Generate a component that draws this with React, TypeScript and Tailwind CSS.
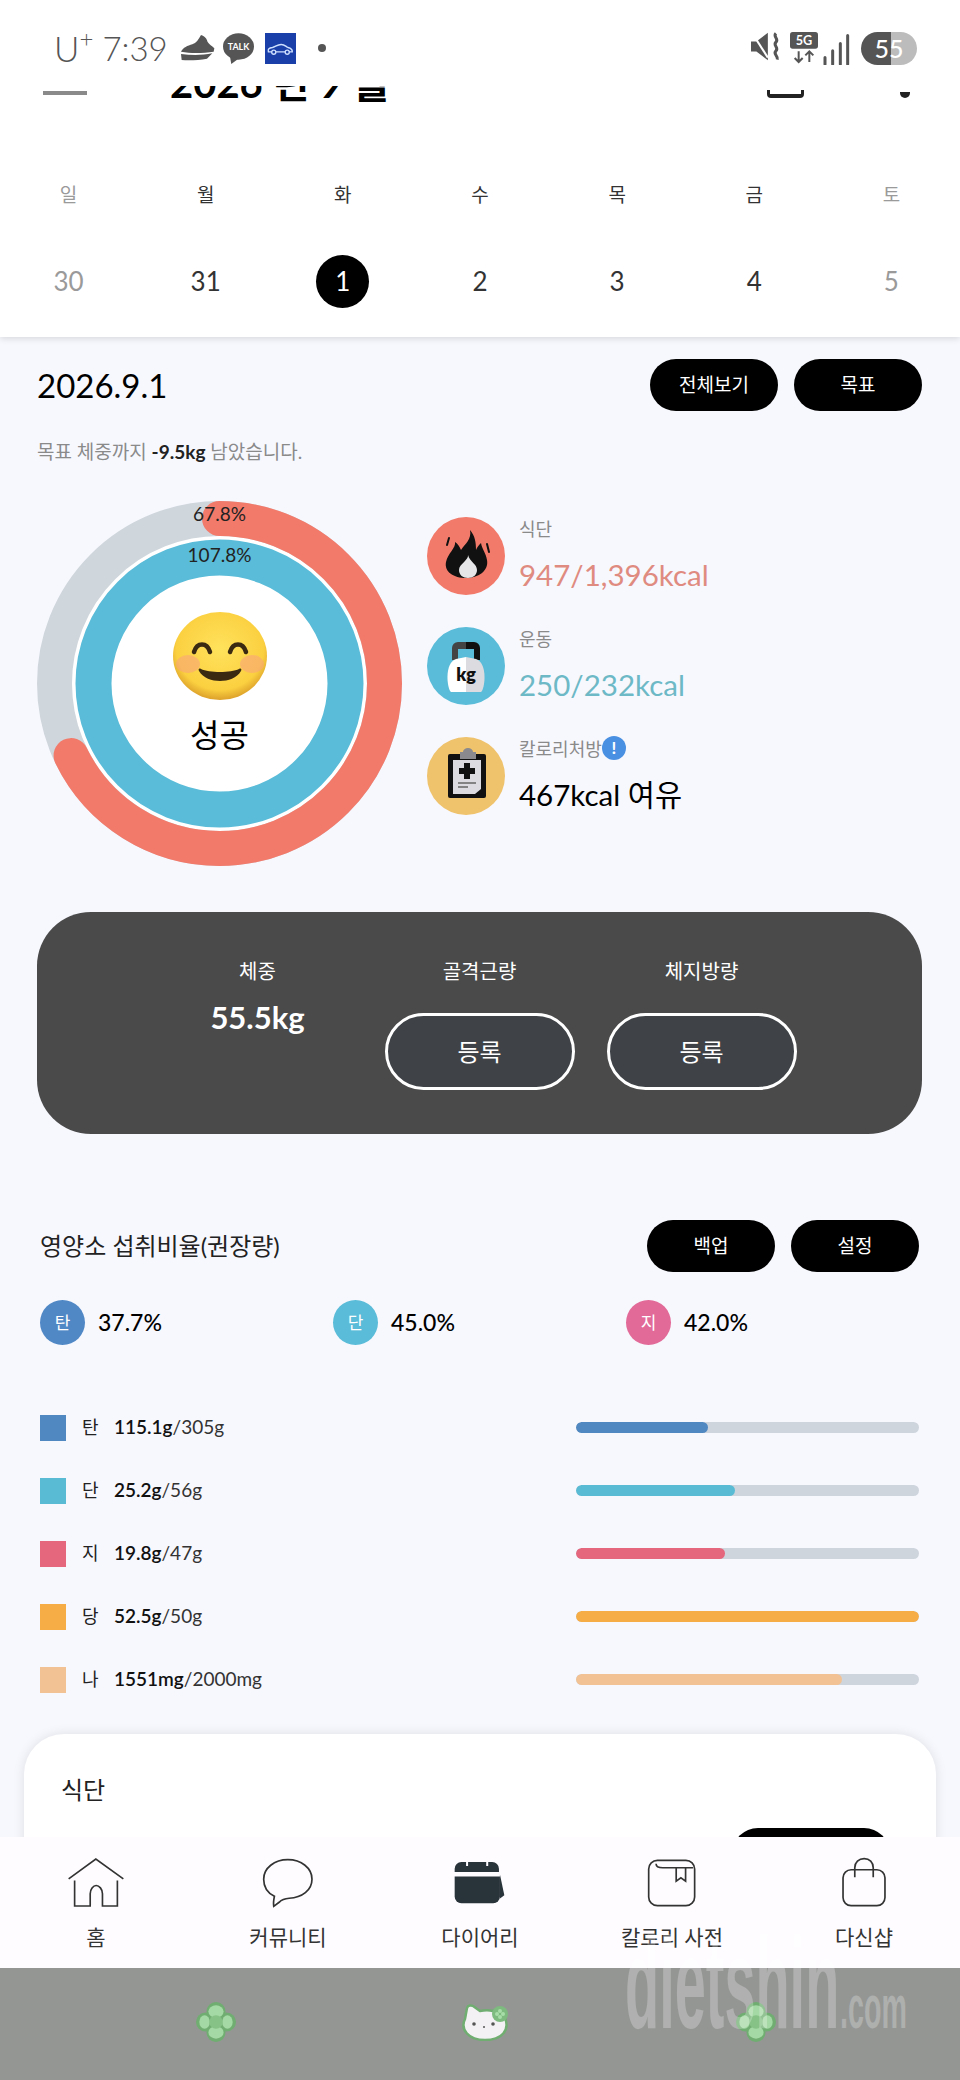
import React from 'react'

const weekdays = [
  { label: '일', color: 'text-[#9a9a9a]' },
  { label: '월', color: 'text-[#333]' },
  { label: '화', color: 'text-[#333]' },
  { label: '수', color: 'text-[#333]' },
  { label: '목', color: 'text-[#333]' },
  { label: '금', color: 'text-[#333]' },
  { label: '토', color: 'text-[#9a9a9a]' },
]

const dates = [
  { label: '30', color: 'text-[#9a9a9a]' },
  { label: '31', color: 'text-[#333]' },
  { label: '1', color: 'text-white', active: true },
  { label: '2', color: 'text-[#333]' },
  { label: '3', color: 'text-[#333]' },
  { label: '4', color: 'text-[#333]' },
  { label: '5', color: 'text-[#9a9a9a]' },
]

const ratios = [
  { label: '탄', value: '37.7%', color: 'bg-[#5088c6]' },
  { label: '단', value: '45.0%', color: 'bg-[#5abcd8]' },
  { label: '지', value: '42.0%', color: 'bg-[#e26a98]' },
]

const nutrients = [
  { label: '탄', value: '115.1g', goal: '/305g', color: 'bg-[#5088c2]', percent: 38.5 },
  { label: '단', value: '25.2g', goal: '/56g', color: 'bg-[#5abcd4]', percent: 46.5 },
  { label: '지', value: '19.8g', goal: '/47g', color: 'bg-[#e5677e]', percent: 43.5 },
  { label: '당', value: '52.5g', goal: '/50g', color: 'bg-[#f7ad45]', percent: 100 },
  { label: '나', value: '1551mg', goal: '/2000mg', color: 'bg-[#f2c294]', percent: 77.6 },
]

const StatusBar = () => (
  <div className="flex h-[86px] items-start justify-between pl-[54px] pr-[43px] pt-[32px]">
    <div className="flex items-center">
      <span className="flex items-start text-[35px] leading-[32px] font-light text-[#555]">U<span className="-mt-[6px] text-[24px] leading-[24px]">+</span></span>
      <span className="ml-[9px] text-[33px] leading-[32px] font-light text-[#555]">7:39</span>
      <svg className="ml-[12px]" width="35" height="26" viewBox="415 35 105 78">
        <path d="M418 85c6-12 20-18 34-22 12-4 18-14 26-28 8 2 16 8 18 16 2 10 14 16 22 24l-2 10c-30 4-66 6-98 0z" fill="#555" />
        <path d="M418 92c32 4 64 4 94-2l-16 16c-24 4-50 6-76 4z" fill="#555" />
      </svg>
      <svg className="ml-[7px]" width="33" height="31" viewBox="0 0 100 94">
        <ellipse cx="50" cy="41" rx="47" ry="40" fill="#555" />
        <path d="M24 70l4 24 22-16z" fill="#555" />
        <text x="50" y="51" textAnchor="middle" fontSize="27" fontWeight="700" fill="#fff">TALK</text>
      </svg>
      <svg className="ml-[10px]" width="31" height="31" viewBox="0 0 92 92">
        <rect width="92" height="92" fill="#1a3fa8" />
        <path d="M10 56c-2-8 2-12 12-13 8-1 14-9 26-9 10 0 14 6 20 9 8 2 14 4 13 13z" fill="none" stroke="#cfe0ff" strokeWidth="4" />
        <circle cx="26" cy="57" r="6" fill="#1a3fa8" stroke="#cfe0ff" strokeWidth="4" />
        <circle cx="66" cy="57" r="6" fill="#1a3fa8" stroke="#cfe0ff" strokeWidth="4" />
      </svg>
      <span className="ml-[22px] h-[8px] w-[8px] rounded-full bg-[#555]" />
    </div>
    <div className="flex items-start">
      <svg width="31" height="29" viewBox="0 0 92 86">
        <path d="M0 28h16L50 2v82L16 58H0z" fill="#555" />
        <path d="M4 4l46 72" stroke="#fff" strokeWidth="6" />
        <path d="M74 4c-10 10 10 16 0 26s10 16 0 26 8 14 4 26" fill="none" stroke="#555" strokeWidth="9" />
      </svg>
      <svg className="ml-[8px]" width="28" height="32" viewBox="0 0 84 96">
        <rect width="84" height="50" rx="8" fill="#555" />
        <text x="42" y="40" textAnchor="middle" fontSize="38" fontWeight="700" fill="#fff">5G</text>
        <path d="M26 58v32M14 78l12 12 12-12M58 90V58M46 70l12-12 12 12" fill="none" stroke="#555" strokeWidth="6" />
      </svg>
      <svg className="ml-[5px] mt-[2px]" width="28" height="31" viewBox="0 0 84 92">
        <path d="M6 70v20M29 50v40M52 28v62M74 4v86" stroke="#555" strokeWidth="9" strokeLinecap="round" />
      </svg>
      <div className="ml-[10px] relative flex h-[33px] w-[56px] overflow-hidden rounded-full">
        <div className="w-[30px] bg-[#555]" />
        <div className="flex-1 bg-[#bcbcbc]" />
        <span className="absolute inset-0 text-center text-[25px] leading-[33px] font-medium text-white">55</span>
      </div>
    </div>
  </div>
)

const Ring = () => (
  <div className="relative h-[365px] w-[365px] shrink-0">
    <svg width="365" height="365" viewBox="0 0 365 365">
      <circle cx="182.5" cy="182.5" r="150" fill="#fff" />
      <circle cx="182.5" cy="182.5" r="165" fill="none" stroke="#cfd6dc" strokeWidth="35" />
      <circle cx="182.5" cy="182.5" r="165" fill="none" stroke="#f27a6a" strokeWidth="35" strokeLinecap="round" pathLength="100" strokeDasharray="67.8 100" transform="rotate(-90 182.5 182.5)" />
      <circle cx="182.5" cy="182.5" r="126" fill="none" stroke="#5abcd8" strokeWidth="36" />
    </svg>
    <span className="absolute left-0 right-0 top-[1px] text-center text-[19px] leading-[24px] text-[#222]">67.8%</span>
    <span className="absolute left-0 right-0 top-[42px] text-center text-[19px] leading-[24px] text-[#222]">107.8%</span>
    <div className="absolute inset-0 flex flex-col items-center pt-[111px]">
      <svg width="94" height="88" viewBox="0 0 94 88">
        <defs>
          <radialGradient id="face" cx="50%" cy="42%" r="58%">
            <stop offset="0%" stopColor="#ffe25c" />
            <stop offset="80%" stopColor="#fbd040" />
            <stop offset="100%" stopColor="#dca02a" />
          </radialGradient>
        </defs>
        <ellipse cx="47" cy="44" rx="47" ry="44" fill="url(#face)" />
        <ellipse cx="15" cy="52" rx="12" ry="9" fill="#f7a080" opacity="0.55" />
        <ellipse cx="79" cy="52" rx="12" ry="9" fill="#f7a080" opacity="0.55" />
        <path d="M21 40c3-10 13-10 16 0M57 40c3-10 13-10 16 0" fill="none" stroke="#3b2a12" strokeWidth="4.5" strokeLinecap="round" />
        <path d="M28 57c8 4 30 4 38 0 2-1 3 0 2 2-4 7-13 10-21 10s-17-3-21-10c-1-2 0-3 2-2z" fill="#3b2a12" />
      </svg>
      <span className="mt-[15px] text-[32px] leading-[40px] text-black">성공</span>
    </div>
  </div>
)

const FlameIcon = () => (
  <svg width="78" height="78" viewBox="0 0 78 78">
    <circle cx="39" cy="39" r="39" fill="#f27a6a" />
    <path d="M43 13c2 9-5 14-9 20-2-4-3-6-6-8 1 6-7 11-9 20-2 10 8 16 20 16s23-7 21-18c-1-7-5-11-6-17-2 2-4 4-5 7 0-8-1-14-6-20z" fill="#111" />
    <path d="M41 38c1 5-9 9-9 15 0 5 4 8 9 8s9-3 9-8c0-6-7-8-9-15z" fill="#e6e6e9" />
    <path d="M22 21l-2 7M60 27l2 8" stroke="#111" strokeWidth="2" strokeLinecap="round" />
  </svg>
)

const KgIcon = () => (
  <svg width="78" height="78" viewBox="0 0 78 78">
    <circle cx="39" cy="39" r="39" fill="#5abcd8" />
    <path d="M25 33V21a6 6 0 0 1 6-6h8v7h-8v11z" fill="#444" />
    <path d="M53 33V21a6 6 0 0 0-6-6h-8v7h8v11z" fill="#111" />
    <path d="M29 32c-12 4-9 30-5 33h15V30z" fill="#fff" />
    <path d="M49 32c12 4 9 30 5 33H39V30z" fill="#dcdce0" />
    <text x="39" y="54" textAnchor="middle" fontSize="18" fontWeight="800" fill="#111">kg</text>
  </svg>
)

const ClipboardIcon = () => (
  <svg width="78" height="78" viewBox="0 0 78 78">
    <circle cx="39" cy="39" r="39" fill="#efc26c" />
    <rect x="21" y="17" width="38" height="44" rx="2" fill="#111" />
    <path d="M26 23h28v29l-6 5H26z" fill="#dcdce0" />
    <path d="M33 15h3a5 4 0 0 1 10 0h3v7H33z" fill="#8a8a8e" />
    <path d="M37 26h6v5h5v6h-5v5h-6v-5h-5v-6h5z" fill="#111" />
    <path d="M31 46h18M31 50h10" stroke="#666" strokeWidth="1.5" />
  </svg>
)

const SummaryRow = ({ icon, label, alert, value, color }: { icon: React.ReactNode; label: string; alert?: boolean; value: string; color: string }) => (
  <div className="flex h-[78px] items-start gap-[14px]">
    {icon}
    <div className="flex flex-col">
      <div className="flex h-[24px] items-center text-[18px] text-[#8a8a8a]">
        {label}
        {alert && (
          <span className="-mt-[2px] flex h-[24px] w-[24px] items-center justify-center rounded-full bg-[#4a90e2] text-[17px] font-bold text-white">!</span>
        )}
      </div>
      <span className={`mt-[15px] text-[29.5px] leading-[38px] ${color}`}>{value}</span>
    </div>
  </div>
)

const BodyStat = ({ label, children }: { label: string; children: React.ReactNode }) => (
  <div className="flex w-[190px] flex-col items-center">
    <span className="text-[20px] leading-[24px] text-white">{label}</span>
    {children}
  </div>
)

const RegisterButton = () => (
  <button className="mt-[30px] h-[77px] w-[190px] rounded-[39px] border-[3px] border-white bg-[#3f4347] text-[24px] text-white">등록</button>
)

const PillButton = ({ label, width = 'w-[128px]' }: { label: string; width?: string }) => (
  <button className={`h-[52px] rounded-[26px] bg-black text-[19px] text-white ${width}`}>{label}</button>
)

const NavHome = () => (
  <svg width="58" height="52" viewBox="80 40 175 155" fill="none" stroke="#333" strokeWidth="5">
    <path d="M85 105l82-60 83 60M103 110v77h47v-37c0-14 9-25 18-25s19 11 19 25v37h45v-77" />
  </svg>
)

const NavBubble = () => (
  <svg width="52" height="52" viewBox="670 40 155 155" fill="none" stroke="#333" strokeWidth="5">
    <path d="M747 48c40 0 72 25 72 58s-30 55-68 57c-12 1-22 4-30 12l-16 12c-2-10 0-20 2-30-20-10-32-28-32-51 0-33 32-58 72-58z" />
  </svg>
)

const NavCalendar = () => (
  <svg width="52" height="52" viewBox="1245 40 155 155">
    <path d="M1382 92l13 62-13 10z" fill="#29333a" />
    <path d="M1247 85v-10a20 20 0 0 1 20-20h14v12h6v-12h54v12h6v-12h12a20 20 0 0 1 20 20v10z" fill="#29333a" />
    <path d="M1247 98h135v60a20 20 0 0 1-20 20h-95a20 20 0 0 1-20-20z" fill="#29333a" />
  </svg>
)

const NavBook = () => (
  <svg width="52" height="52" viewBox="380 40 155 155" fill="none" stroke="#333" strokeWidth="5">
    <rect x="388" y="50" width="137" height="135" rx="26" />
    <path d="M410 60c0 10 8 12 20 12h90M470 72v40l14-10 14 10V72" />
  </svg>
)

const NavBag = () => (
  <svg width="52" height="52" viewBox="955 40 155 155" fill="none" stroke="#333" strokeWidth="5">
    <rect x="970" y="78" width="125" height="107" rx="24" />
    <path d="M1005 100V72c0-16 12-27 28-27s27 11 27 27v28" />
  </svg>
)

const navItems = [
  { label: '홈', icon: <NavHome /> },
  { label: '커뮤니티', icon: <NavBubble /> },
  { label: '다이어리', icon: <NavCalendar /> },
  { label: '칼로리 사전', icon: <NavBook /> },
  { label: '다신샵', icon: <NavBag /> },
]

const Clover = () => (
  <svg width="40" height="40" viewBox="0 0 42 42">
    <g fill="#6fae70">
      <circle cx="21" cy="10" r="10" />
      <circle cx="21" cy="32" r="10" />
      <circle cx="10" cy="21" r="10" />
      <circle cx="32" cy="21" r="10" />
    </g>
    <g fill="#a4d8a4">
      <ellipse cx="21" cy="10" rx="8" ry="6.5" />
      <ellipse cx="21" cy="32" rx="8" ry="6.5" />
      <ellipse cx="9" cy="21" rx="5.5" ry="7" />
      <ellipse cx="33" cy="21" rx="5.5" ry="7" />
    </g>
    <circle cx="21" cy="21" r="7" fill="#86c286" />
  </svg>
)

const Kitty = () => (
  <svg width="48" height="38" viewBox="0 0 48 38">
    <path d="M5 5c1-3 4-3 6-2l7 5c5-1 9-1 13 0l6-3 6 10c5 12-3 22-20 22S-2 26 3 16z" fill="#f4f1f4" stroke="#6fae70" strokeWidth="2.5" strokeLinejoin="round" />
    <circle cx="38" cy="11" r="8" fill="#7dbb7e" />
    <g fill="#a8dca8">
      <circle cx="38" cy="8" r="2" />
      <circle cx="38" cy="14" r="2" />
      <circle cx="35" cy="11" r="2" />
      <circle cx="41" cy="11" r="2" />
    </g>
    <circle cx="12" cy="21" r="1.8" fill="#555" />
    <circle cx="31" cy="21" r="1.8" fill="#555" />
    <circle cx="22" cy="24" r="1" fill="#555" />
  </svg>
)

const App = () => {
  return (
    <div className="relative h-[2080px] w-[960px] overflow-hidden bg-[#f7f8fe] [font-family:Lato,'Noto_Sans_CJK_KR',sans-serif]">
      <header className="h-[337px] bg-white shadow-[0_2px_6px_rgba(0,0,0,0.12)]">
        <StatusBar />
        <div className="flex h-[20px] items-end overflow-hidden pl-[43px] pr-[50px]">
          <span className="mb-[11px] h-[4px] w-[44px] bg-[#8a8a8a]" />
          <span className="ml-[83px] mb-[3px] text-[40px] leading-none font-bold text-black">2026 년 9 월</span>
          <div className="flex-1" />
          <span className="mb-[8px] h-[8px] w-[37px] rounded-b-[4px] border-x-[3px] border-b-[4px] border-[#222]" />
          <span className="ml-[96px] mb-[8px] h-[6px] w-[10px] rounded-b-full bg-[#222]" />
        </div>
        <div className="mt-[76px] grid grid-cols-7">
          {weekdays.map((day) => (
            <span key={day.label} className={`text-center text-[19px] leading-[26px] ${day.color}`}>{day.label}</span>
          ))}
        </div>
        <div className="mt-[47px] grid grid-cols-7">
          {dates.map((date) => (
            <div key={date.label} className="flex h-[53px] items-center justify-center">
              <span className={`flex h-[53px] w-[53px] items-center justify-center rounded-full text-[26px] ${date.color} ${date.active ? 'bg-black' : ''}`}>{date.label}</span>
            </div>
          ))}
        </div>
      </header>

      <section className="pl-[37px] pr-[38px]">
        <div className="flex items-center justify-between pt-[22px]">
          <span className="text-[33px] leading-[51px] text-black">2026.9.1</span>
          <div className="flex gap-[16px]">
            <PillButton label="전체보기" />
            <PillButton label="목표" />
          </div>
        </div>
        <p className="mt-[29px] text-[19px] leading-[24px] text-[#8a8a8a]">
          목표 체중까지 <b className="font-bold text-[#222]">-9.5kg</b> 남았습니다.
        </p>
        <div className="mt-[37px] flex gap-[25px]">
          <Ring />
          <div className="flex flex-col gap-[32px] pt-[16px]">
            <SummaryRow icon={<FlameIcon />} label="식단" value="947/1,396kcal" color="text-[#e08b80]" />
            <SummaryRow icon={<KgIcon />} label="운동" value="250/232kcal" color="text-[#6db9c6]" />
            <SummaryRow icon={<ClipboardIcon />} label="칼로리처방" alert value="467kcal 여유" color="text-black" />
          </div>
        </div>
        <div className="mt-[46px] flex h-[222px] justify-center gap-[32px] rounded-[54px] bg-[#4a4a4a] pt-[47px]">
          <BodyStat label="체중">
            <span className="mt-[14px] text-[31px] leading-[40px] font-bold text-white">55.5kg</span>
          </BodyStat>
          <BodyStat label="골격근량">
            <RegisterButton />
          </BodyStat>
          <BodyStat label="체지방량">
            <RegisterButton />
          </BodyStat>
        </div>
      </section>

      <section className="mt-[86px] pl-[40px] pr-[41px]">
        <div className="flex items-center justify-between">
          <span className="text-[24px] text-[#222]">영양소 섭취비율(권장량)</span>
          <div className="flex gap-[16px]">
            <PillButton label="백업" />
            <PillButton label="설정" />
          </div>
        </div>
        <div className="mt-[28px] grid grid-cols-3">
          {ratios.map((ratio) => (
            <div key={ratio.label} className="flex items-center gap-[13px]">
              <span className={`flex h-[45px] w-[45px] items-center justify-center rounded-full text-[17px] text-white ${ratio.color}`}>{ratio.label}</span>
              <span className="text-[23px] font-medium text-black">{ratio.value}</span>
            </div>
          ))}
        </div>
        <div className="mt-[51px]">
          {nutrients.map((item) => (
            <div key={item.label} className="flex h-[63px] items-center">
              <span className={`h-[26px] w-[26px] ${item.color}`} />
              <span className="ml-[16px] w-[32px] text-[18px] text-[#222]">{item.label}</span>
              <span className="text-[19px] font-semibold text-[#111]">{item.value}</span>
              <span className="text-[19px] text-[#333]">{item.goal}</span>
              <div className="flex-1" />
              <div className="h-[11px] w-[343px] overflow-hidden rounded-full bg-[#cfd5dd]">
                <div className={`h-full rounded-full ${item.color}`} style={{ width: `${item.percent}%` }} />
              </div>
            </div>
          ))}
        </div>
      </section>

      <section className="mx-[24px] mt-[23px] h-[400px] rounded-t-[40px] bg-white px-[37px] pt-[44px] shadow-[0_0_12px_rgba(0,0,0,0.1)]">
        <span className="block text-[24px] leading-[24px] text-[#222]">식단</span>
        <div className="ml-auto mr-[9px] mt-[26px] h-[52px] w-[158px] rounded-[26px] bg-black" />
      </section>

      <div className="absolute bottom-0 left-0 right-0">
        <nav className="grid h-[131px] grid-cols-5 bg-[#fefcff] pt-[20px]">
          {navItems.map((item) => (
            <div key={item.label} className="flex flex-col items-center">
              {item.icon}
              <span className="mt-[14px] text-[21px] leading-[28px] text-[#333]">{item.label}</span>
            </div>
          ))}
        </nav>
        <div className="flex h-[112px] items-center justify-center gap-[226px] bg-[#949694] pb-[5px] pl-[12px]">
          <Clover />
          <Kitty />
          <Clover />
        </div>
      </div>

      <div className="absolute left-[625px] top-[1933px] flex items-end font-['Liberation_Sans'] font-bold text-white/25">
        <span className="w-[215px] origin-left scale-x-[0.43] text-[130px] leading-[100px]">dietshin</span>
        <span className="-mb-[4px] w-[67px] origin-left scale-x-[0.47] text-[61px] leading-[60px]">.com</span>
      </div>
    </div>
  )
}

export default App
